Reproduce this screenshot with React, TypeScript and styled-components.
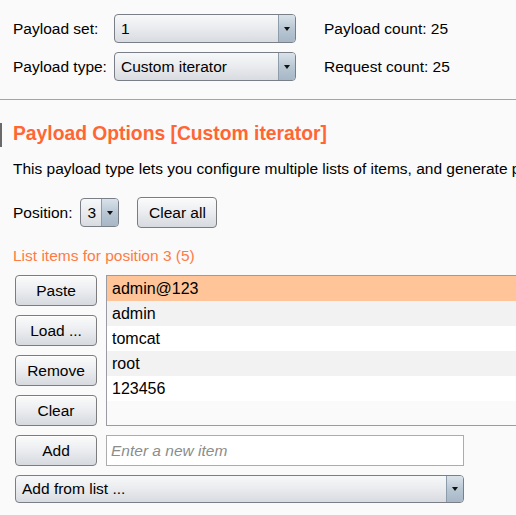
import styled, { createGlobalStyle } from "styled-components"

const GlobalStyle = createGlobalStyle`
  html, body {
    margin: 0;
    padding: 0;
    background: #fafafa;
    overflow: hidden;
  }
  body {
    font-family: "Liberation Sans", Arial, sans-serif;
    font-size: 15.5px;
    color: #000;
  }
`

const Page = styled.div`
  width: 516px;
  height: 515px;
  overflow: hidden;
  background: #fafafa;
`

const TopGrid = styled.div`
  display: grid;
  grid-template-columns: 101px 182px auto;
  grid-auto-rows: 29px;
  row-gap: 9px;
  align-items: center;
  padding: 14px 0 0 13px;
`

const Label = styled.span`
  line-height: 20px;
  white-space: nowrap;
`

const Count = styled.span`
  margin-left: 28px;
  line-height: 20px;
  white-space: nowrap;
`

const Separator = styled.div`
  margin-top: 18px;
  height: 1px;
  background: #a4a4a4;
`

const HeadingRow = styled.div`
  display: flex;
  align-items: flex-start;
  margin-top: 23px;
  height: 24px;
`

const Marker = styled.div`
  width: 2px;
  height: 24px;
  background: #6a6a6a;
  margin-right: 11px;
`

const Heading = styled.h2`
  margin: -1px 0 0;
  font-size: 19.3px;
  line-height: 24px;
  font-weight: bold;
  color: #ff6633;
  white-space: nowrap;
`

const Section = styled.div`
  padding-left: 13px;
`

const Description = styled.p`
  margin: 12px 0 0;
  line-height: 20px;
  white-space: nowrap;
`

const PositionRow = styled.div`
  display: flex;
  align-items: center;
  gap: 8px;
  height: 31px;
  margin-top: 18px;
`

const SubHeading = styled.div`
  margin-top: 18px;
  line-height: 20px;
  color: #ff7a45;
`

const ListArea = styled.div`
  display: flex;
  margin-top: 9px;
  padding-left: 15px;
  gap: 9px;
`

const ButtonColumn = styled.div`
  display: flex;
  flex-direction: column;
  gap: 9px;
`

const Button = styled.button<{ $width?: number }>`
  box-sizing: border-box;
  width: ${(p) => p.$width ?? 82}px;
  height: 31px;
  padding: 0;
  border: 1px solid #7c7c7c;
  border-radius: 4px;
  background: linear-gradient(#fbfbfb, #eceef1 45%, #d6d9de);
  box-shadow: inset 0 1px 0 #ffffff;
  font-family: "Liberation Sans", Arial, sans-serif;
  font-size: 15.5px;
  color: #000;
  flex-shrink: 0;
`

const ClearAllButton = styled(Button)`
  margin-left: 10px;
`

const ComboBox = styled.div<{ $width: number; $height?: number }>`
  box-sizing: border-box;
  display: flex;
  width: ${(p) => p.$width}px;
  height: ${(p) => p.$height ?? 29}px;
  border: 1px solid #7a7f87;
  border-radius: 4px;
  overflow: hidden;
  background: linear-gradient(#f7f8f9, #e9ebee 50%, #d8dbe0);
  flex-shrink: 0;
`

const ComboText = styled.span`
  flex: 1;
  padding-left: 6px;
  display: flex;
  align-items: center;
  white-space: nowrap;
  overflow: hidden;
`

const ComboArrow = styled.span`
  width: 16px;
  display: flex;
  align-items: center;
  justify-content: center;
  border-left: 1px solid #8d9cab;
  background: linear-gradient(#d9e2ea, #b9c7d4 50%, #a7b7c6);
`

const Triangle = styled.span`
  width: 0;
  height: 0;
  border-left: 3.5px solid transparent;
  border-right: 3.5px solid transparent;
  border-top: 4px solid #111;
`

const ItemList = styled.div`
  box-sizing: border-box;
  width: 460px;
  height: 151px;
  border: 1px solid #9b9ba3;
  background: #fafafa;
  flex-shrink: 0;
`

const ItemRow = styled.div<{ $selected?: boolean; $alt?: boolean }>`
  height: 25px;
  line-height: 25px;
  padding-left: 5px;
  font-size: 16px;
  background: ${(p) => (p.$selected ? "#ffc598" : p.$alt ? "#f2f2f2" : "#ffffff")};
`

const AddRow = styled.div`
  display: flex;
  gap: 9px;
  margin-top: 9px;
  padding-left: 15px;
`

const TextInput = styled.input`
  box-sizing: border-box;
  width: 358px;
  height: 31px;
  border: 1px solid #acacac;
  background: #fff;
  padding: 0 0 0 4px;
  font-family: "Liberation Sans", Arial, sans-serif;
  font-size: 15.5px;
  outline: none;

  &::placeholder {
    color: #8c8c8c;
    font-style: italic;
  }
`

const FromListRow = styled.div`
  margin-top: 9px;
  padding-left: 15px;
`

const Combo = ({ value, width, height }: { value: string; width: number; height?: number }) => (
  <ComboBox $width={width} $height={height}>
    <ComboText>{value}</ComboText>
    <ComboArrow>
      <Triangle />
    </ComboArrow>
  </ComboBox>
)

const items = ["admin@123", "admin", "tomcat", "root", "123456"]

export default function App() {
  return (
    <Page>
      <GlobalStyle />
      <TopGrid>
        <Label>Payload set:</Label>
        <Combo value="1" width={182} />
        <Count>Payload count: 25</Count>
        <Label>Payload type:</Label>
        <Combo value="Custom iterator" width={182} />
        <Count>Request count: 25</Count>
      </TopGrid>
      <Separator />
      <HeadingRow>
        <Marker />
        <Heading>Payload Options [Custom iterator]</Heading>
      </HeadingRow>
      <Section>
        <Description>
          This payload type lets you configure multiple lists of items, and generate payloads using all permutations of items in the lists.
        </Description>
        <PositionRow>
          <Label>Position:</Label>
          <Combo value="3" width={39} />
          <ClearAllButton $width={80}>Clear all</ClearAllButton>
        </PositionRow>
        <SubHeading>List items for position 3 (5)</SubHeading>
      </Section>
      <ListArea>
        <ButtonColumn>
          <Button>Paste</Button>
          <Button>Load ...</Button>
          <Button>Remove</Button>
          <Button>Clear</Button>
        </ButtonColumn>
        <ItemList>
          {items.map((item, i) => (
            <ItemRow key={item} $selected={i === 0} $alt={i % 2 === 1}>
              {item}
            </ItemRow>
          ))}
        </ItemList>
      </ListArea>
      <AddRow>
        <Button>Add</Button>
        <TextInput placeholder="Enter a new item" />
      </AddRow>
      <FromListRow>
        <Combo value="Add from list ..." width={449} height={28} />
      </FromListRow>
    </Page>
  )
}
